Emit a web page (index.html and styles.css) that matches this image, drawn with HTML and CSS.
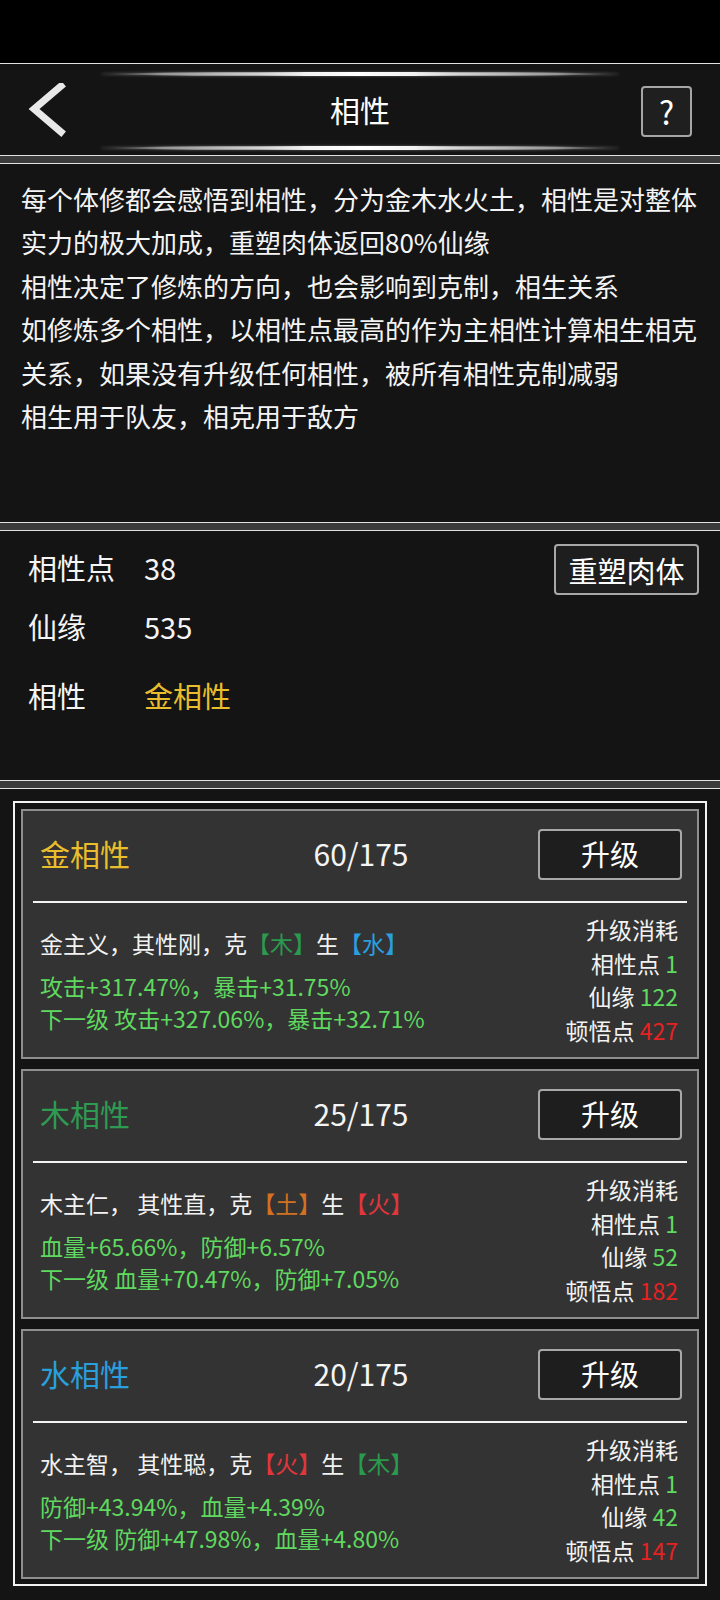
FILE: index.html
```html
<!DOCTYPE html>
<html lang="zh-CN">
<head>
<meta charset="utf-8">
<title>相性</title>
<link rel="stylesheet" href="styles.css">
</head>
<body>
<div class="screen">
  <div class="topgap"></div>

  <header class="panel header">
    <div class="glow"></div>
    <div class="nav">
      <div class="nav-left">
        <svg class="back" width="40" height="56" viewBox="0 0 40 56">
          <polyline points="34,3 7,26 34,49" fill="none" stroke="#e8e8e8" stroke-width="7" stroke-linecap="square" stroke-linejoin="miter"/>
        </svg>
      </div>
      <div class="title">相性</div>
      <div class="nav-right"><div class="help">?</div></div>
    </div>
    <div class="glow"></div>
  </header>
  <div class="band"></div>

  <section class="panel intro">
    <p>每个体修都会感悟到相性，分为金木水火土，相性是对整体实力的极大加成，重塑肉体返回80%仙缘</p>
    <p>相性决定了修炼的方向，也会影响到克制，相生关系</p>
    <p>如修炼多个相性，以相性点最高的作为主相性计算相生相克关系，如果没有升级任何相性，被所有相性克制减弱</p>
    <p>相生用于队友，相克用于敌方</p>
  </section>
  <div class="band"></div>

  <section class="panel stats">
    <div class="stat-row first">
      <span class="stat-label">相性点</span>
      <span class="stat-value">38</span>
      <div class="btn reshape">重塑肉体</div>
    </div>
    <div class="stat-row second">
      <span class="stat-label">仙缘</span>
      <span class="stat-value">535</span>
    </div>
    <div class="stat-row third">
      <span class="stat-label">相性</span>
      <span class="stat-value gold">金相性</span>
    </div>
  </section>
  <div class="band"></div>

  <section class="panel list">
    <div class="frame">
      <div class="card">
        <div class="card-head">
          <span class="card-title gold">金相性</span>
          <span class="card-level">60/175</span>
          <div class="btn upgrade">升级</div>
        </div>
        <div class="divider"></div>
        <div class="card-body">
          <div class="desc">
            <div class="desc-line">金主义，其性刚，克<span class="c-wood">【木】</span>生<span class="c-water">【水】</span></div>
            <div class="bonus">攻击+317.47%，暴击+31.75%</div>
            <div class="bonus">下一级 攻击+327.06%，暴击+32.71%</div>
          </div>
          <div class="cost">
            <div>升级消耗</div>
            <div>相性点 <span class="num-ok">1</span></div>
            <div>仙缘 <span class="num-ok">122</span></div>
            <div>顿悟点 <span class="num-bad">427</span></div>
          </div>
        </div>
      </div>

      <div class="card">
        <div class="card-head">
          <span class="card-title wood">木相性</span>
          <span class="card-level">25/175</span>
          <div class="btn upgrade">升级</div>
        </div>
        <div class="divider"></div>
        <div class="card-body">
          <div class="desc">
            <div class="desc-line">木主仁， 其性直，克<span class="c-earth">【土】</span>生<span class="c-fire">【火】</span></div>
            <div class="bonus">血量+65.66%，防御+6.57%</div>
            <div class="bonus">下一级 血量+70.47%，防御+7.05%</div>
          </div>
          <div class="cost">
            <div>升级消耗</div>
            <div>相性点 <span class="num-ok">1</span></div>
            <div>仙缘 <span class="num-ok">52</span></div>
            <div>顿悟点 <span class="num-bad">182</span></div>
          </div>
        </div>
      </div>

      <div class="card">
        <div class="card-head">
          <span class="card-title water">水相性</span>
          <span class="card-level">20/175</span>
          <div class="btn upgrade">升级</div>
        </div>
        <div class="divider"></div>
        <div class="card-body">
          <div class="desc">
            <div class="desc-line">水主智， 其性聪，克<span class="c-fire">【火】</span>生<span class="c-wood">【木】</span></div>
            <div class="bonus">防御+43.94%，血量+4.39%</div>
            <div class="bonus">下一级 防御+47.98%，血量+4.80%</div>
          </div>
          <div class="cost">
            <div>升级消耗</div>
            <div>相性点 <span class="num-ok">1</span></div>
            <div>仙缘 <span class="num-ok">42</span></div>
            <div>顿悟点 <span class="num-bad">147</span></div>
          </div>
        </div>
      </div>
    </div>
  </section>
</div>
</body>
</html>
```

FILE: styles.css
```css
html, body {
  margin: 0;
  padding: 0;
  background: #000;
}

body {
  font-family: "Noto Sans CJK SC", "Noto Sans", sans-serif;
  color: #f2f2f2;
}

.screen {
  width: 720px;
  height: 1600px;
  overflow: hidden;
  background: #000;
}

.topgap {
  height: 63px;
}

.panel {
  background: #141414;
  border-top: 1px solid #e2e2e2;
  border-bottom: 1px solid #e2e2e2;
  box-sizing: border-box;
}

.band {
  height: 7px;
  background: #3b3b3b;
}

/* header */
.header {
  height: 93px;
  padding: 8px 0 5px;
  display: flex;
  flex-direction: column;
}

.glow {
  height: 4px;
  margin: 0 100px;
  border-radius: 50%;
  background: linear-gradient(90deg,
    rgba(255,255,255,0) 0%,
    rgba(255,255,255,0.55) 12%,
    rgba(255,255,255,0.95) 40%,
    #ffffff 50%,
    rgba(255,255,255,0.95) 60%,
    rgba(255,255,255,0.55) 88%,
    rgba(255,255,255,0) 100%);
  box-shadow: 0 0 3px rgba(255,255,255,0.35);
}

.nav {
  height: 70px;
  display: grid;
  grid-template-columns: 1fr auto 1fr;
  align-items: center;
}

.nav-left {
  padding-left: 27px;
  display: flex;
  align-items: center;
}

.back {
  display: block;
}

.title {
  font-size: 30px;
  color: #fff;
  line-height: 1;
  padding-bottom: 4px;
}

.nav-right {
  display: flex;
  justify-content: flex-end;
  padding-right: 28px;
}

.help {
  width: 51px;
  height: 51px;
  box-sizing: border-box;
  border: 2px solid #a6a6a6;
  border-radius: 4px;
  background: #1f1f1f;
  color: #fff;
  font-size: 32px;
  line-height: 1;
  display: flex;
  align-items: center;
  justify-content: center;
}

/* intro */
.intro {
  height: 360px;
  padding: 13px 0 0 21px;
}

.intro p {
  margin: 0;
  width: 680px;
  font-size: 26px;
  line-height: 43.4px;
  color: #f4f4f4;
}

/* stats */
.stats {
  height: 251px;
  padding: 13px 21px 0 28px;
}

.stat-row {
  display: flex;
  align-items: center;
  font-size: 29px;
  color: #f4f4f4;
}

.stat-row.first {
  height: 51px;
}

.stat-row.first .stat-label,
.stat-row.first .stat-value {
  padding-bottom: 6px;
}

.stat-row.second {
  height: 62px;
}

.stat-row.third {
  height: 76px;
}

.stat-label {
  width: 116px;
}

.stat-value {
  flex: 1;
}

.gold {
  color: #e9bd2b;
}

.btn {
  box-sizing: border-box;
  border: 2px solid #a8a8a8;
  border-radius: 4px;
  background: #1e1e1e;
  color: #fff;
  display: flex;
  align-items: center;
  justify-content: center;
}

.reshape {
  width: 145px;
  height: 51px;
  font-size: 29px;
}

/* list */
.list {
  height: 813px;
  padding-top: 12px;
  border-bottom: none;
}

.frame {
  margin-left: 13px;
  width: 694px;
  box-sizing: border-box;
  border: 2px solid #f2f2f2;
  padding: 6px 6px 5px;
  display: flex;
  flex-direction: column;
  gap: 10px;
}

.card {
  height: 250px;
  box-sizing: border-box;
  border: 2px solid #8e8e8e;
  background: #333333;
}

.card-head {
  display: grid;
  grid-template-columns: 1fr auto 1fr;
  align-items: center;
  padding: 18px 15px 0 17px;
  height: 51px;
}

.card-title {
  font-size: 30px;
  line-height: 1;
  padding-bottom: 4px;
}

.card-title.wood { color: #2f9a52; }
.card-title.water { color: #2a9fdd; }

.card-level {
  font-size: 30px;
  color: #f4f4f4;
  line-height: 1;
  padding-bottom: 4px;
}

.upgrade {
  justify-self: end;
  width: 144px;
  height: 51px;
  font-size: 29px;
  padding-bottom: 3px;
}

.divider {
  height: 2px;
  background: #f4f4f4;
  margin: 21px 10px 0;
}

.card-body {
  display: flex;
  justify-content: space-between;
  padding: 0 19px 0 17px;
  font-size: 23px;
  white-space: nowrap;
}

.desc {
  padding-top: 24px;
}

.desc-line {
  line-height: 33px;
  margin-bottom: 10px;
  color: #f2f2f2;
}

.bonus {
  line-height: 32px;
  color: #5fd95f;
}

.c-wood { color: #2a9a4e; }
.c-water { color: #2a9fe0; }
.c-earth { color: #d2711f; }
.c-fire { color: #e0363c; }

.cost {
  padding-top: 10px;
  text-align: right;
  line-height: 33.5px;
  color: #f2f2f2;
}

.num-ok { color: #5fd95f; }
.num-bad { color: #e52222; }
```
